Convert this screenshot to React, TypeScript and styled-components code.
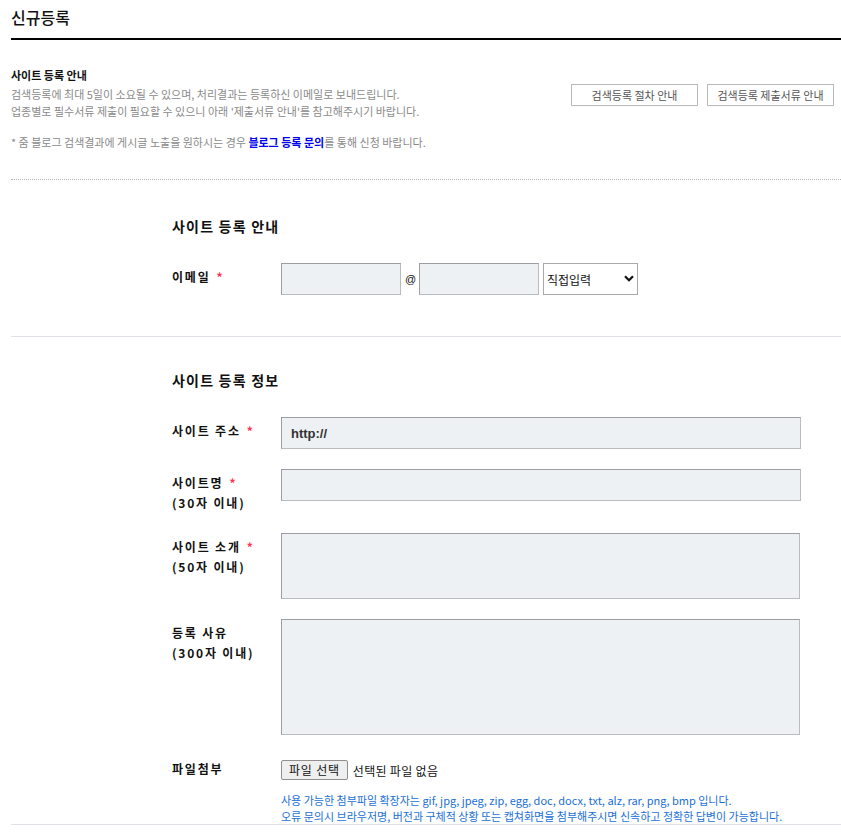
import styled, { createGlobalStyle } from 'styled-components';

const GlobalStyle = createGlobalStyle`
  html, body {
    margin: 0;
    padding: 0;
    background: #fff;
    overflow: hidden;
  }
  body {
    font-family: 'Noto Sans CJK KR', 'Noto Sans', sans-serif;
    color: #222;
  }
`;

const FONT = `'Noto Sans CJK KR', 'Noto Sans', sans-serif`;

const ChevronIcon = () => (
  <svg width="10" height="7" viewBox="0 0 10 7">
    <path d="M1 1.2 L5 5.2 L9 1.2" fill="none" stroke="#111" strokeWidth="2.2" />
  </svg>
);

const Label = ({ title, sub, required }: LabelProp) => (
  <S.Label>
    <div>
      {title}
      {required && <S.Star>*</S.Star>}
    </div>
    {sub && <div>{sub}</div>}
  </S.Label>
);

interface LabelProp {
  title: string;
  sub?: string;
  required?: boolean;
}

const App = () => {
  return (
    <>
      <GlobalStyle />
      <S.Page>
        <S.Title>신규등록</S.Title>

        <S.Info>
          <S.InfoText>
            <S.InfoTitle>사이트 등록 안내</S.InfoTitle>
            <S.InfoLine>검색등록에 최대 5일이 소요될 수 있으며, 처리결과는 등록하신 이메일로 보내드립니다.</S.InfoLine>
            <S.InfoLine>업종별로 필수서류 제출이 필요할 수 있으니 아래 '제출서류 안내'를 참고해주시기 바랍니다.</S.InfoLine>
            <S.InfoNote>
              * 줌 블로그 검색결과에 게시글 노출을 원하시는 경우 <S.Link>블로그 등록 문의</S.Link>를 통해 신청 바랍니다.
            </S.InfoNote>
          </S.InfoText>
          <S.GuideButtons>
            <S.GuideButton>검색등록 절차 안내</S.GuideButton>
            <S.GuideButton>검색등록 제출서류 안내</S.GuideButton>
          </S.GuideButtons>
        </S.Info>

        <S.Section border="dotted" top={36}>
          <S.SectionTitle>사이트 등록 안내</S.SectionTitle>
          <S.Row>
            <Label title="이메일" required />
            <S.EmailBox>
              <S.Input width={120} />
              <S.At>@</S.At>
              <S.Input width={120} />
              <S.SelectWrap>
                <S.Select defaultValue="direct">
                  <option value="direct">직접입력</option>
                  <option value="naver">naver.com</option>
                  <option value="daum">daum.net</option>
                </S.Select>
                <S.Chevron>
                  <ChevronIcon />
                </S.Chevron>
              </S.SelectWrap>
            </S.EmailBox>
          </S.Row>
        </S.Section>

        <S.Section border="solid" top={33} last>
          <S.SectionTitle>사이트 등록 정보</S.SectionTitle>
          <S.Row>
            <Label title="사이트 주소" required />
            <S.Input width={520} defaultValue="http://" bold />
          </S.Row>
          <S.Row>
            <Label title="사이트명" sub="(30자 이내)" required />
            <S.Input width={520} />
          </S.Row>
          <S.Row>
            <Label title="사이트 소개" sub="(50자 이내)" required />
            <S.TextArea height={66} />
          </S.Row>
          <S.Row>
            <Label title="등록 사유" sub="(300자 이내)" />
            <S.TextArea height={116} />
          </S.Row>
          <S.Row>
            <Label title="파일첨부" />
            <S.FileBox>
              <S.FileLine>
                <S.FileButton type="button">파일 선택</S.FileButton>
                <S.FileName>선택된 파일 없음</S.FileName>
              </S.FileLine>
              <S.FileHelp>
                <div>사용 가능한 첨부파일 확장자는 gif, jpg, jpeg, zip, egg, doc, docx, txt, alz, rar, png, bmp 입니다.</div>
                <div>오류 문의시 브라우저명, 버전과 구체적 상황 또는 캡쳐화면을 첨부해주시면 신속하고 정확한 답변이 가능합니다.</div>
              </S.FileHelp>
            </S.FileBox>
          </S.Row>
        </S.Section>
      </S.Page>
    </>
  );
};

const S = {
  Page: styled.div`
    width: 830px;
    margin-left: 11px;
  `,

  Title: styled.h1`
    margin: 0;
    padding: 6px 0 10px;
    font-family: ${FONT};
    font-size: 16px;
    font-weight: 500;
    line-height: 22px;
    color: #111;
    border-bottom: 2px solid #000;
  `,

  Info: styled.div`
    display: flex;
    justify-content: space-between;
    padding: 27px 7px 28px 0;
  `,

  InfoText: styled.div`
    font-family: ${FONT};
    font-size: 11px;
    letter-spacing: 0;
  `,

  InfoTitle: styled.div`
    margin-bottom: 3px;
    font-weight: 700;
    line-height: 16px;
    color: #111;
  `,

  InfoLine: styled.div`
    line-height: 17px;
    color: #8a8a8a;
  `,

  InfoNote: styled.div`
    margin-top: 14px;
    line-height: 17px;
    color: #8a8a8a;
  `,

  Link: styled.b`
    color: #0000ee;
  `,

  GuideButtons: styled.div`
    display: flex;
    gap: 9px;
    padding-top: 17px;
  `,

  GuideButton: styled.button`
    width: 127px;
    height: 22px;
    padding: 0;
    background: #fff;
    border: 1px solid #b9b9b9;
    font-family: ${FONT};
    font-size: 11px;
    letter-spacing: 0;
    color: #555;
  `,

  Section: styled.div<{ border: 'dotted' | 'solid'; top: number; last?: boolean }>`
    display: flex;
    flex-direction: column;
    gap: 20px;
    padding: ${(props) => props.top}px 0 ${(props) => (props.last ? 0 : 41)}px 161px;
    border-top: 1px ${(props) => props.border} ${(props) => (props.border === 'dotted' ? '#b0b0b0' : '#dfe2e6')};
    border-bottom: ${(props) => (props.last ? '1px solid #dfe2e6' : 'none')};
  `,

  SectionTitle: styled.h2`
    margin: 0 0 7px;
    font-family: ${FONT};
    font-size: 14px;
    font-weight: 700;
    line-height: 20px;
    letter-spacing: 1.2px;
    color: #111;
  `,

  Row: styled.div`
    display: flex;
    align-items: flex-start;
  `,

  Label: styled.div`
    flex: 0 0 109px;
    padding-top: 4px;
    font-family: ${FONT};
    font-size: 12px;
    font-weight: 700;
    line-height: 20px;
    letter-spacing: 1.8px;
    color: #111;
  `,

  Star: styled.span`
    margin-left: 6px;
    color: #ff3355;
    font-weight: 700;
  `,

  EmailBox: styled.div`
    display: flex;
    align-items: center;
    gap: 4px;
  `,

  Input: styled.input<{ width: number; bold?: boolean }>`
    box-sizing: border-box;
    width: ${(props) => props.width}px;
    height: 32px;
    padding: 0 9px;
    background: #eef1f4;
    border: 1px solid;
    border-color: #9a9da1 #b8bbbf #b8bbbf #9a9da1;
    border-radius: 0;
    outline: none;
    font-family: 'Liberation Sans', ${FONT};
    font-size: 13px;
    font-weight: ${(props) => (props.bold ? 700 : 400)};
    color: #333;
  `,

  TextArea: styled.textarea<{ height: number }>`
    box-sizing: border-box;
    width: 519px;
    height: ${(props) => props.height}px;
    margin: 0;
    padding: 6px 9px;
    background: #eef1f4;
    border: 1px solid;
    border-color: #9a9da1 #b8bbbf #b8bbbf #9a9da1;
    border-radius: 0;
    outline: none;
    resize: none;
    font-family: ${FONT};
    font-size: 12px;
  `,

  At: styled.span`
    width: 10px;
    text-align: center;
    font-family: 'Liberation Sans', sans-serif;
    font-size: 11px;
    color: #111;
  `,

  SelectWrap: styled.div`
    position: relative;
    width: 95px;
    height: 32px;
  `,

  Select: styled.select`
    box-sizing: border-box;
    width: 100%;
    height: 100%;
    padding: 0 0 0 3px;
    appearance: none;
    background: #fff;
    border: 1px solid #a9a9a9;
    border-radius: 0;
    font-family: ${FONT};
    font-size: 12px;
    color: #111;
  `,

  Chevron: styled.span`
    position: absolute;
    top: 12px;
    right: 4px;
    display: flex;
    pointer-events: none;
  `,

  FileBox: styled.div`
    display: flex;
    flex-direction: column;
    padding-top: 5px;
  `,

  FileLine: styled.div`
    display: flex;
    align-items: center;
    gap: 5px;
  `,

  FileButton: styled.button`
    height: 20px;
    padding: 0 7px;
    background: #efefef;
    border: 1px solid #8f8f8f;
    border-radius: 2px;
    font-family: ${FONT};
    font-size: 12px;
    line-height: 18px;
    letter-spacing: 0.8px;
    color: #111;
  `,

  FileName: styled.span`
    font-family: ${FONT};
    font-size: 12px;
    letter-spacing: 0.3px;
    color: #111;
  `,

  FileHelp: styled.div`
    margin-top: 12px;
    font-family: ${FONT};
    font-size: 11px;
    line-height: 16px;
    letter-spacing: 0;
    color: #1a6fd6;
  `,
};

export default App;
